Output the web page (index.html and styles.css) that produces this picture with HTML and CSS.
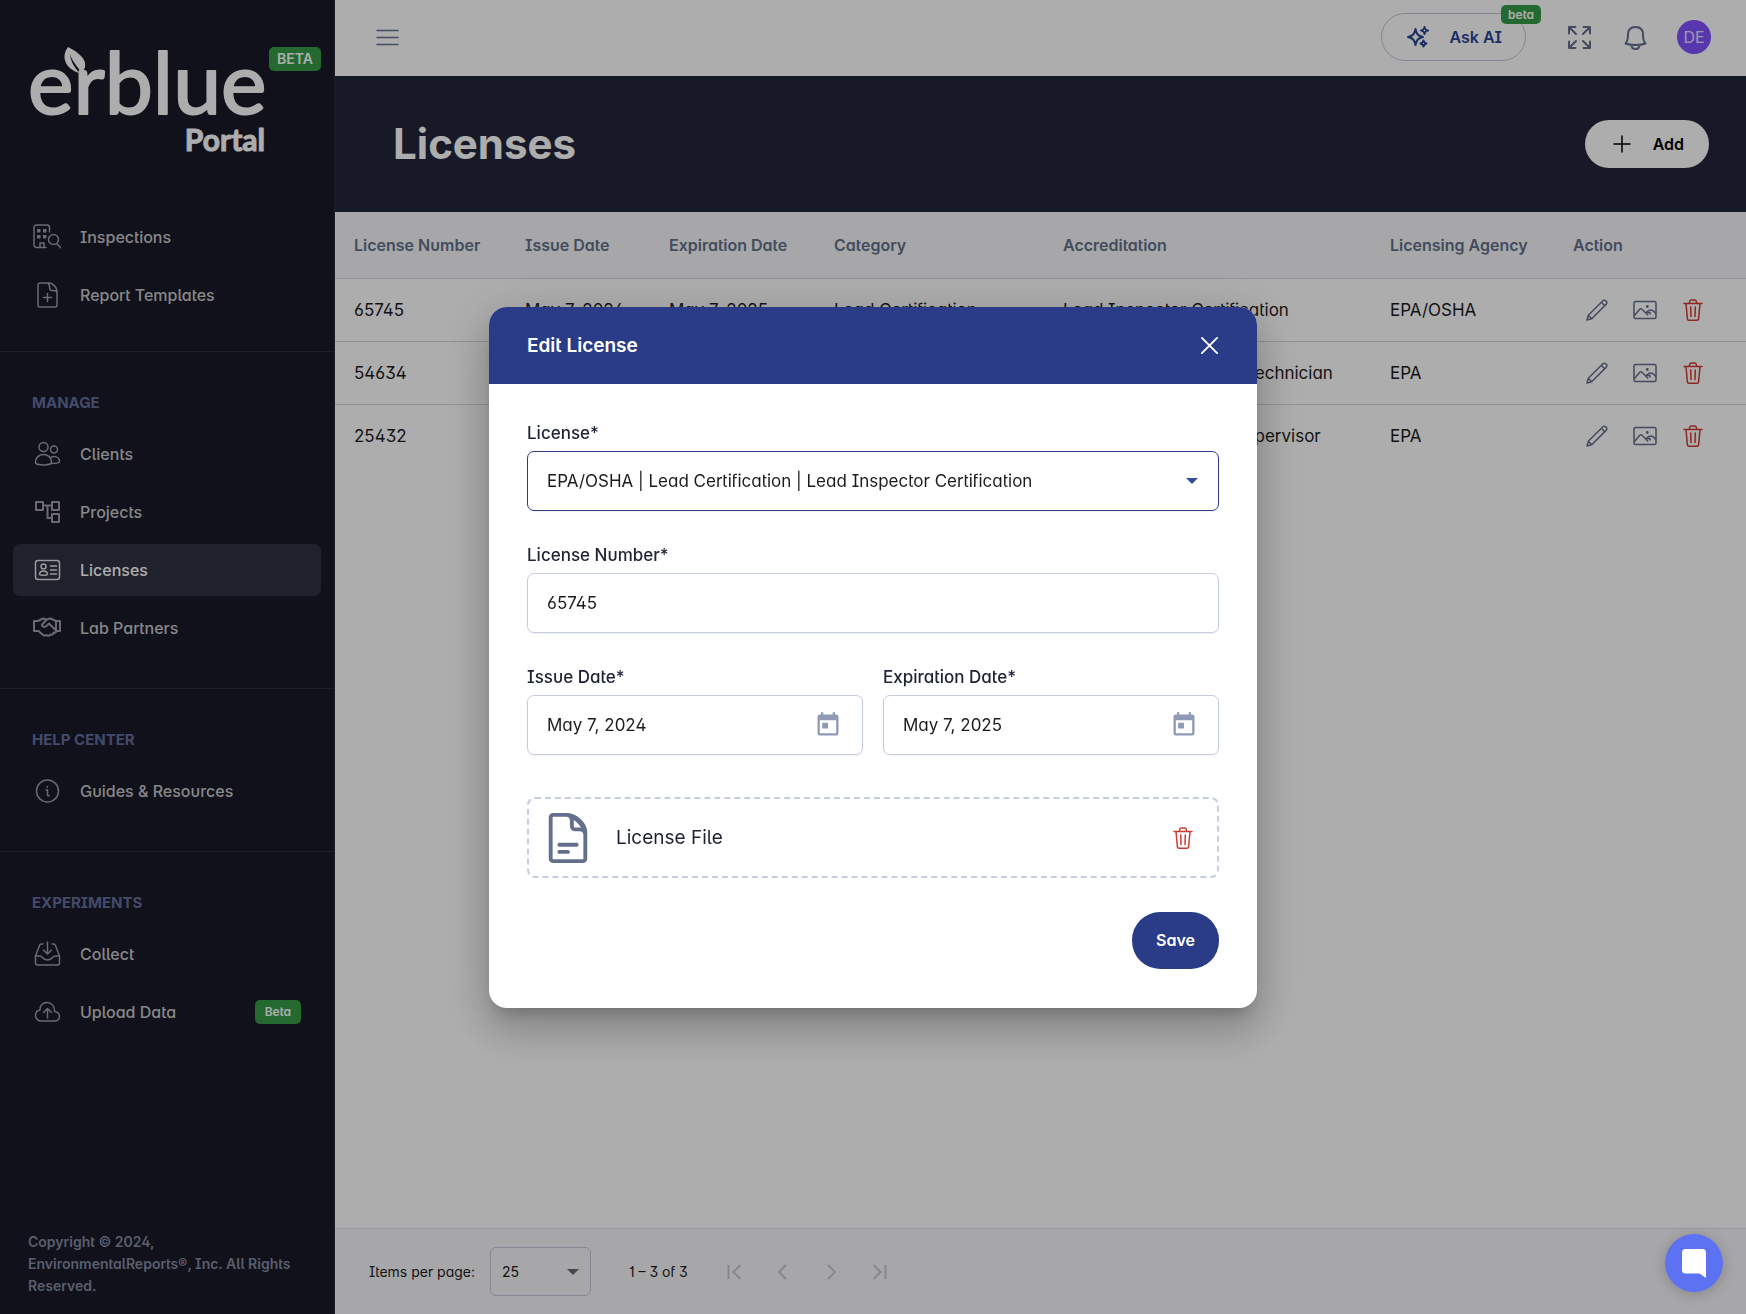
FILE: index.html
```html
<!DOCTYPE html>
<html lang="en">
<head>
<meta charset="utf-8">
<meta name="viewport" content="width=device-width, initial-scale=1">
<title>Licenses</title>
<link rel="stylesheet" href="styles.css">
</head>
<body>
<svg class="sprite" aria-hidden="true">
  <symbol id="i-pencil" viewBox="0 0 24 24"><path d="M2 22l1.300-4.700L17.900 2.700a1.900 1.900 0 0 1 2.700 0l.7.7a1.900 1.900 0 0 1 0 2.700L6.700 20.700zM3.300 17.300l3.400 3.400M16.300 4.300l3.400 3.400"/></symbol>
  <symbol id="i-image" viewBox="0 0 24 24"><rect x="1" y="3.500" width="22" height="17" rx="1.500"/><path d="M1.500 17.500l5.200-6.200a1.500 1.500 0 0 1 2.300 0l5.700 5.700M13 14.500l2.700-2c2.300-1 5.300.5 7.100 3.200M13.500 14.500h3.500v1.500"/><circle cx="14.300" cy="8.500" r=".7"/></symbol>
  <symbol id="i-trash" viewBox="0 0 24 24"><path d="M3 5.500h18M5 5.500l1.400 15.300a1.600 1.600 0 0 0 1.600 1.400h8a1.600 1.600 0 0 0 1.600-1.400L19 5.500M8.200 5.500l.6-2.400a1.400 1.400 0 0 1 1.400-1.100h3.600a1.400 1.400 0 0 1 1.400 1.100l.6 2.400M9.700 9l.3 9.500M14.300 9l-.3 9.500"/></symbol>
  <symbol id="i-calendar" viewBox="0 0 24 24"><path d="M19 3h-1V1h-2v2H8V1H6v2H5a2 2 0 0 0-2 2v14a2 2 0 0 0 2 2h14a2 2 0 0 0 2-2V5a2 2 0 0 0-2-2zm0 16H5V8h14zM7 10h5v5H7z"/></symbol>
</svg>

<div class="app">
  <aside class="sidebar">
    <div class="brand">
      <svg class="logo" viewBox="0 0 240 112" role="img" aria-label="erblue Portal">
        <text class="logo-word" x="-1" y="67">erblue</text>
        <text class="logo-sub" x="236" y="104" text-anchor="end">Portal</text>
        <path class="logo-leaf" d="M39 0c10 5 19 12 17 20-1 3-2 4-4 6-2-6-8-9-11-19 1 9 5 13 9 19-3-1-5-2-8-4-7-6-9-14-3-22z"/>
      </svg>
      <span class="tag tag-brand">BETA</span>
    </div>

    <nav class="nav">
      <div class="group group-first">
        <a class="item" href="#"><svg class="ico" viewBox="0 0 28 28"><path d="M13 24.500H3.500A2.500 2.500 0 0 1 1 22V4.500A2.500 2.500 0 0 1 3.500 2H14a2.500 2.500 0 0 1 2.500 2.500V9M7 24v-4h4v4M24 21l4 4"/><circle cx="20.500" cy="16.500" r="5"/><path class="solid" d="M4 6h3.500v3.500H4zM10 6h3.500v3.500H10zM4 12h3.500v3.500H4zM10 12h3.500v3.500H10z"/></svg>Inspections</a>
        <a class="item" href="#"><svg class="ico" viewBox="0 0 28 28"><path d="M16 2H7a2 2 0 0 0-2 2v20a2 2 0 0 0 2 2h15a2 2 0 0 0 2-2V10c0-3-4-8-8-8zM14 2c4 0 1.500 7.500 4 7.500s6-.5 6 3M14.500 12.500v8M10.500 16.500h8"/></svg>Report Templates</a>
      </div>
      <div class="group">
        <h2 class="group-title">MANAGE</h2>
        <a class="item" href="#"><svg class="ico" viewBox="0 0 28 28"><circle cx="10.500" cy="7" r="4.500"/><circle cx="21" cy="9.500" r="3.500"/><path d="M2.500 22.500c0-5 3.500-8 8-8s8 3 8 8c0 1.500-4 2.500-8 2.500s-8-1-8-2.500zM18.500 23.500c5 0 8-.5 8-2 0-3-2.500-5-5.500-5-1.500 0-3 .5-4 1.500"/></svg>Clients</a>
        <a class="item" href="#"><svg class="ico heavy" viewBox="0 0 28 28"><path d="M3 4h7v8H3zM19 4h7v8h-7zM19 16h7v8h-7zM10 7.500h9M14.500 7.500V20H19"/></svg>Projects</a>
        <a class="item item-active" href="#" aria-current="page"><svg class="ico" viewBox="0 0 28 28"><rect x="2.500" y="4.500" width="24" height="19" rx="2.500"/><circle cx="10.500" cy="10.500" r="2.500"/><path d="M6.500 18.500c0-2.500 2-3.500 4-3.500s4 1 4 3.500c-1 1-7 1-8 0zM17.500 10h6M17.500 14h6M17.500 18h6"/></svg>Licenses</a>
        <a class="item" href="#"><svg class="ico heavy" viewBox="0 0 28 28"><path d="M1 7h4l5-2.500 3 1M27 7h-4l-5.500-2.500c-2 0-4 1-5 2.500L9 10.500c0 3 3.500 3 5 1l2-2 7 7c1 1-1 3-2.500 2 0 2-1.500 2.500-3 2-1 1.500-3 1.500-4 .5-1.500 1-3 .5-4-.5L5.500 17H1V7M23 7v10h4V7"/></svg>Lab Partners</a>
      </div>
      <div class="group">
        <h2 class="group-title">HELP CENTER</h2>
        <a class="item" href="#"><svg class="ico" viewBox="0 0 28 28"><circle cx="14.500" cy="14" r="11"/><path d="M13 13h1.500v4.500c0 1 .5 1.500 1.800 1.300M14.300 9.500v.8"/></svg>Guides &amp; Resources</a>
      </div>
      <div class="group group-last">
        <h2 class="group-title">EXPERIMENTS</h2>
        <a class="item" href="#"><svg class="ico" viewBox="0 0 28 28"><path d="M10 4H8.500A2 2 0 0 0 6.500 5.500L2.500 16v7a2 2 0 0 0 2 2h20a2 2 0 0 0 2-2v-7l-4-10.500a2 2 0 0 0-2-1.500H19M2.500 16H7c3 0 2 4 7.500 4s4.500-4 7.500-4h4.500M14.500 2v11.500M10.500 10l4 4 4-4"/></svg>Collect</a>
        <a class="item" href="#"><svg class="ico" viewBox="0 0 28 28"><path d="M8 23h13.500c3 0 5-2 5-4.500 0-3-2.500-5-5-5 .5-5-3-9-7.500-9s-7.500 3.500-7 7.500c-2.500.5-4.500 2.500-4.500 5.500S5 23 8 23zM14.500 20v-9M10.500 14.500l4-4 4 4"/></svg><span class="item-text">Upload Data</span><span class="tag">Beta</span></a>
      </div>
    </nav>
    <p class="copyright">Copyright © 2024, EnvironmentalReports®, Inc. All Rights Reserved.</p>
  </aside>

  <div class="content">
    <header class="topbar">
      <button class="icon-btn" type="button" aria-label="Toggle menu"><svg class="ico" viewBox="0 0 28 28"><path d="M4 7.500h21M4 14.500h21M4 21.500h21"/></svg></button>
      <div class="top-actions">
        <button class="ask" type="button"><svg class="ico" viewBox="0 0 28 28"><path d="M10.500 6c1 5 2.500 7 7.500 8-5 1-6.500 3-7.500 8-1-5-2.500-7-7.500-8 5-1 6.500-3 7.500-8zM19.500 4c.5 2.500 1 3 3.500 3.500-2.500.5-3 1-3.500 3.500-.5-2.500-1-3-3.500-3.500 2.500-.5 3-1 3.500-3.500zM18.500 17.500c.5 2 1 2.500 3 3-2 .5-2.500 1-3 3-.5-2-1-2.500-3-3 2-.5 2.500-1 3-3z"/></svg>Ask AI<span class="tag ask-tag">beta</span></button>
        <button class="icon-btn" type="button" aria-label="Full screen"><svg class="ico heavy" viewBox="0 0 28 28"><path d="M10.500 4H4v6.500M4 4l7 7M18.500 4H25v6.500M25 4l-7 7M10.500 25H4v-6.500M4 25l7-7M18.500 25H25v-6.500M25 25l-7-7"/></svg></button>
        <button class="icon-btn" type="button" aria-label="Notifications"><svg class="ico heavy" viewBox="0 0 28 28"><path d="M4.500 20.500c2-2 2.500-5 2.500-9C7 6.500 10 4 14.500 4S22 6.500 22 11.500c0 4 .5 7 2.500 9-5 2-15 2-20 0zM10.500 22c0 2.500 1.500 4 4 4s4-1.500 4-4"/></svg></button>
        <button class="avatar" type="button">DE</button>
      </div>
    </header>

    <div class="hero">
      <h1 class="hero-title">Licenses</h1>
      <button class="add" type="button"><svg class="ico" viewBox="0 0 28 28"><path d="M14 6v16M6 14h16"/></svg>Add</button>
    </div>

    <main class="table-area">
      <table class="table">
        <colgroup><col class="c-number"><col class="c-issue"><col class="c-exp"><col class="c-cat"><col><col class="c-agency"><col class="c-action"></colgroup>
        <thead><tr><th>License Number</th><th>Issue Date</th><th>Expiration Date</th><th>Category</th><th>Accreditation</th><th>Licensing Agency</th><th>Action</th></tr></thead>
        <tbody>
          <tr><td>65745</td><td>May 7, 2024</td><td>May 7, 2025</td><td>Lead Certification</td><td>Lead Inspector Certification</td><td>EPA/OSHA</td>
            <td><div class="row-actions"><button type="button" aria-label="Edit"><svg><use href="#i-pencil"/></svg></button><button type="button" aria-label="View image"><svg><use href="#i-image"/></svg></button><button class="danger" type="button" aria-label="Delete"><svg><use href="#i-trash"/></svg></button></div></td></tr>
          <tr><td>54634</td><td>May 7, 2024</td><td>May 7, 2025</td><td>Lead Certification</td><td>Lead Safety Sampling Technician</td><td>EPA</td>
            <td><div class="row-actions"><button type="button" aria-label="Edit"><svg><use href="#i-pencil"/></svg></button><button type="button" aria-label="View image"><svg><use href="#i-image"/></svg></button><button class="danger" type="button" aria-label="Delete"><svg><use href="#i-trash"/></svg></button></div></td></tr>
          <tr><td>25432</td><td>May 7, 2024</td><td>May 7, 2025</td><td>Asbestos</td><td>Asbestos Contractor/Supervisor</td><td>EPA</td>
            <td><div class="row-actions"><button type="button" aria-label="Edit"><svg><use href="#i-pencil"/></svg></button><button type="button" aria-label="View image"><svg><use href="#i-image"/></svg></button><button class="danger" type="button" aria-label="Delete"><svg><use href="#i-trash"/></svg></button></div></td></tr>
        </tbody>
      </table>
    </main>

    <footer class="pager">
      <label for="page-size">Items per page:</label>
      <div class="select-wrap pager-select">
        <select id="page-size"><option>25</option></select>
        <svg class="caret" viewBox="0 0 12 6"><path d="M0 0h12L6 6z"/></svg>
      </div>
      <span class="range">1 – 3 of 3</span>
      <div class="pager-nav">
        <button type="button" aria-label="First page" disabled><svg viewBox="0 0 24 24"><path d="M5.500 5v14M17.500 5l-7 7 7 7"/></svg></button>
        <button type="button" aria-label="Previous page" disabled><svg viewBox="0 0 24 24"><path d="M15 5l-7 7 7 7"/></svg></button>
        <button type="button" aria-label="Next page" disabled><svg viewBox="0 0 24 24"><path d="M9 5l7 7-7 7"/></svg></button>
        <button type="button" aria-label="Last page" disabled><svg viewBox="0 0 24 24"><path d="M18.500 5v14M6.500 5l7 7-7 7"/></svg></button>
      </div>
    </footer>
  </div>
</div>

<div class="backdrop">
  <section class="modal" role="dialog" aria-modal="true" aria-labelledby="modal-title">
    <header class="modal-head">
      <h2 id="modal-title">Edit License</h2>
      <button class="close" type="button" aria-label="Close"><svg viewBox="0 0 20 20"><path d="M2 2l16 16M18 2L2 18"/></svg></button>
    </header>
    <form class="modal-body">
      <div class="field">
        <label for="license">License*</label>
        <div class="select-wrap box box-focus">
          <select id="license"><option>EPA/OSHA | Lead Certification | Lead Inspector Certification</option></select>
          <svg class="caret" viewBox="0 0 12 6"><path d="M0 0h12L6 6z"/></svg>
        </div>
      </div>
      <div class="field">
        <label for="number">License Number*</label>
        <div class="box"><input id="number" type="text" value="65745"></div>
      </div>
      <div class="dates">
        <div class="field">
          <label for="issue">Issue Date*</label>
          <div class="box"><input id="issue" type="text" value="May 7, 2024"><button class="cal" type="button" aria-label="Open calendar"><svg><use href="#i-calendar"/></svg></button></div>
        </div>
        <div class="field">
          <label for="expiration">Expiration Date*</label>
          <div class="box"><input id="expiration" type="text" value="May 7, 2025"><button class="cal" type="button" aria-label="Open calendar"><svg><use href="#i-calendar"/></svg></button></div>
        </div>
      </div>
      <div class="file">
        <svg class="file-ico" viewBox="0 0 40 52"><path d="M18 2H4.500A2.500 2.500 0 0 0 2 4.500v43A2.500 2.500 0 0 0 4.500 50h31a2.500 2.500 0 0 0 2.500-2.500V20C38 11 28 2 18 2zM18 2c4 0 6 2 6 6v5c0 3 1 4 4 4h4c4 0 6 3 6 6M24 4c6 3 11 8 12.500 14M11 33h18M11 40.500h9"/></svg>
        <span class="file-name">License File</span>
        <button class="danger" type="button" aria-label="Remove file"><svg><use href="#i-trash"/></svg></button>
      </div>
      <button class="save" type="button">Save</button>
    </form>
  </section>
</div>

<button class="chat" type="button" aria-label="Open chat"><svg viewBox="0 0 24 28"><path d="M3.500 0h17A3.500 3.500 0 0 1 24 3.500V29l-6.500-4.500h-14A3.500 3.500 0 0 1 0 21V3.500A3.500 3.500 0 0 1 3.500 0z"/></svg></button>
</body>
</html>
```

FILE: styles.css
```css
* { box-sizing: border-box; }

html {
  font-family: Inter, "Liberation Sans", sans-serif;
  font-size: 16px;
  line-height: 24px;
  font-feature-settings: "salt";
  color: #1c1c1c;
}

body, h1, h2, p { margin: 0; }

button, input, select {
  font: inherit;
  font-feature-settings: inherit;
  color: inherit;
  border: 0;
  margin: 0;
  padding: 0;
  background: none;
}

svg { display: block; fill: none; stroke: currentColor; stroke-linecap: round; stroke-linejoin: round; }
.sprite { display: none; }

.ico { width: 28px; height: 28px; flex: none; stroke-width: 1.5; }
.heavy { stroke-width: 2; }
.solid { fill: currentColor; stroke: none; }

.app { display: flex; min-height: 100vh; background: #fff; }

/* Sidebar */
.sidebar {
  display: flex;
  flex-direction: column;
  flex: none;
  width: 335px;
  background: #191a27;
  border-right: 1px solid #2b2d3c;
}
.brand { display: flex; align-items: flex-start; padding: 47px 13px 0 29px; height: 211px; }
.logo { width: 240px; height: 112px; overflow: visible; flex: none; }
.logo text { fill: #fff; stroke: #fff; }
.logo-word { font: 400 86px Lato, sans-serif; stroke-width: 2; }
.logo-sub { font: 700 30px Lato, sans-serif; stroke-width: 1; }
.logo-leaf { fill: #fff; stroke: none; }

.tag {
  padding: 0 10px;
  border-radius: 5px;
  background: #359d47;
  color: #fff;
  font-size: 12px;
  font-weight: 600;
  line-height: 24px;
}
.tag-brand { padding: 0 8px; font-size: 14px; }

.nav { flex: 1; }
.group {
  display: flex;
  flex-direction: column;
  gap: 6px;
  padding: 41px 13px 34px;
  border-bottom: 1px solid #2b2d3c;
}
.group-first { padding-top: 0; padding-bottom: 30px; }
.group-last { border: 0; }
.group-title {
  margin: 0 19px 9px;
  color: #636e9e;
  font-size: 15px;
  font-weight: 700;
  line-height: 20px;
}
.item {
  display: flex;
  align-items: center;
  gap: 19px;
  height: 52px;
  padding: 0 20px;
  border-radius: 7px;
  color: #c8c8ca;
  font-weight: 500;
  text-decoration: none;
}
.item .ico { color: #9c9ca6; }
.item-active { background: #2e3241; color: #fff; }
.item-active .ico { color: #e4e4e8; }
.item-text { flex: 1; }
.copyright {
  padding: 0 27px 17px 28px;
  color: #838aa2;
  font-size: 14px;
  font-weight: 600;
  line-height: 22px;
}

/* Main column */
.content { display: flex; flex-direction: column; flex: 1; min-width: 0; }

.topbar {
  display: flex;
  align-items: center;
  justify-content: space-between;
  height: 76px;
  padding: 0 35px 2px 38px;
  color: #64708b;
}
.top-actions { display: flex; align-items: center; gap: 28px; }
.ask {
  position: relative;
  display: flex;
  align-items: center;
  gap: 16px;
  height: 48px;
  margin-right: 11px;
  padding: 0 23px;
  border: 1px solid #c4c7dc;
  border-radius: 24px;
  color: #2a4596;
  font-weight: 600;
}
.ask .ico { stroke-width: 2; }
.ask-tag { position: absolute; top: -9px; right: -16px; padding: 0 7px; line-height: 19px; }
.avatar {
  width: 34px;
  height: 34px;
  border-radius: 50%;
  background: #7f51ff;
  color: #e8e0ff;
}

.hero {
  display: flex;
  align-items: center;
  justify-content: space-between;
  height: 136px;
  padding: 0 37px 0 58px;
  background: #232638;
}
.hero-title { color: #fff; font-size: 42px; font-weight: 700; line-height: 52px; }
.add {
  display: flex;
  align-items: center;
  gap: 17px;
  height: 48px;
  padding: 0 25px 0 23px;
  border-radius: 24px;
  background: #fff;
  color: #000;
  font-weight: 600;
}

.table-area { flex: 1; }
.table { width: 100%; table-layout: fixed; border-collapse: collapse; }
.c-number { width: 166px; }
.c-issue { width: 144px; }
.c-exp { width: 165px; }
.c-cat { width: 229px; }
.c-agency { width: 183px; }
.c-action { width: 197px; }
.table th, .table td { padding: 0 0 0 24px; text-align: left; white-space: nowrap; }
.table th:first-child, .table td:first-child { padding-left: 19px; }
.table th { height: 66px; background: #f6f7fa; color: #64708b; font-weight: 600; }
.table td { height: 63px; font-size: 17px; }
.table tr { border-bottom: 1px solid #d5d8dd; }
.table tbody tr:last-child { border-bottom: 0; }
.row-actions { display: flex; gap: 24px; padding-left: 12px; color: #64708b; }
.row-actions svg, .file .danger svg { width: 24px; height: 24px; stroke-width: 1.5; }
.row-actions .danger, .danger { color: #d03a30; }

.pager {
  display: flex;
  align-items: center;
  height: 86px;
  padding: 0 34px;
  border-top: 1px solid #dfe3ec;
  background: #f6f7fa;
  font-size: 14px;
}
.select-wrap { position: relative; display: flex; align-items: center; }
.select-wrap select { width: 100%; height: 100%; appearance: none; }
.caret { position: absolute; right: 11px; width: 12px; height: 6px; fill: currentColor; stroke: none; pointer-events: none; }
.pager-select {
  width: 101px;
  height: 49px;
  margin: 0 38px 0 15px;
  border: 1px solid #c4c7dc;
  border-radius: 6px;
}
.pager-select select { padding-left: 11px; }
.pager-select .caret { color: #6b6b6b; }
.pager-nav { display: flex; gap: 24px; margin-left: 35px; color: #c6c8cb; }
.pager-nav svg { width: 24px; height: 24px; stroke-width: 2; stroke-linecap: butt; stroke-linejoin: miter; }

/* Dialog */
.backdrop {
  position: fixed;
  inset: 0;
  display: flex;
  align-items: center;
  justify-content: center;
  background: rgba(0, 0, 0, .32);
}
.modal {
  width: 768px;
  max-width: 100%;
  overflow: hidden;
  border-radius: 18px;
  background: #fff;
  box-shadow: 0 11px 15px -7px rgba(0, 0, 0, .2), 0 24px 38px 3px rgba(0, 0, 0, .14), 0 9px 46px 8px rgba(0, 0, 0, .12);
}
.modal-head {
  display: flex;
  align-items: center;
  justify-content: space-between;
  height: 77px;
  padding: 1px 38px 0;
  background: #2a3c88;
  color: #fff;
}
.modal-head h2 { font-size: 19px; font-weight: 600; line-height: 28px; }
.close svg { width: 19px; height: 19px; stroke-width: 2; }
.modal-body { display: flex; flex-direction: column; gap: 32px; padding: 37px 38px 39px; font-size: 17px; }
.field { display: flex; flex-direction: column; gap: 6px; }
.field label { color: #1e2337; font-weight: 500; }
.dates { display: grid; grid-template-columns: repeat(2, minmax(0, 1fr)); gap: 20px; }
.box {
  display: flex;
  align-items: center;
  height: 60px;
  border: 1px solid #c5cde0;
  border-radius: 7px;
  background: #fff;
  box-shadow: 0 1px 2px rgba(0, 0, 0, .06);
}
.box input { flex: 1; min-width: 0; height: 100%; padding: 0 19px; outline: 0; }
.box select { padding-left: 19px; }
.box-focus { border-color: #2a3c88; }
.box-focus .caret { right: 20px; color: #345097; }
.cal { margin-right: 20px; color: #8f9ab5; }
.cal svg { width: 28px; height: 28px; fill: currentColor; stroke: none; }
.file {
  display: flex;
  align-items: center;
  height: 81px;
  margin-top: 10px;
  padding: 2px 22px 0 19px;
  border: 2px dashed #c5cde0;
  border-radius: 8px;
}
.file-ico { width: 40px; height: 50px; color: #646f8e; stroke-width: 4; }
.file-name { flex: 1; margin-left: 28px; color: #1e2337; font-size: 19px; }
.save {
  align-self: flex-end;
  height: 57px;
  margin-top: 2px;
  padding: 0 24px;
  border-radius: 28px;
  background: #2a3c88;
  color: #fff;
  font-size: 16px;
  font-weight: 600;
}

.chat {
  position: fixed;
  right: 23px;
  bottom: 22px;
  display: flex;
  align-items: center;
  justify-content: center;
  width: 58px;
  height: 58px;
  border-radius: 50%;
  background: #5d72f2;
  color: #fff;
  box-shadow: 0 2px 14px rgba(0, 0, 0, .2);
}
.chat svg { width: 24px; height: 28px; fill: currentColor; stroke: none; overflow: visible; }
```
